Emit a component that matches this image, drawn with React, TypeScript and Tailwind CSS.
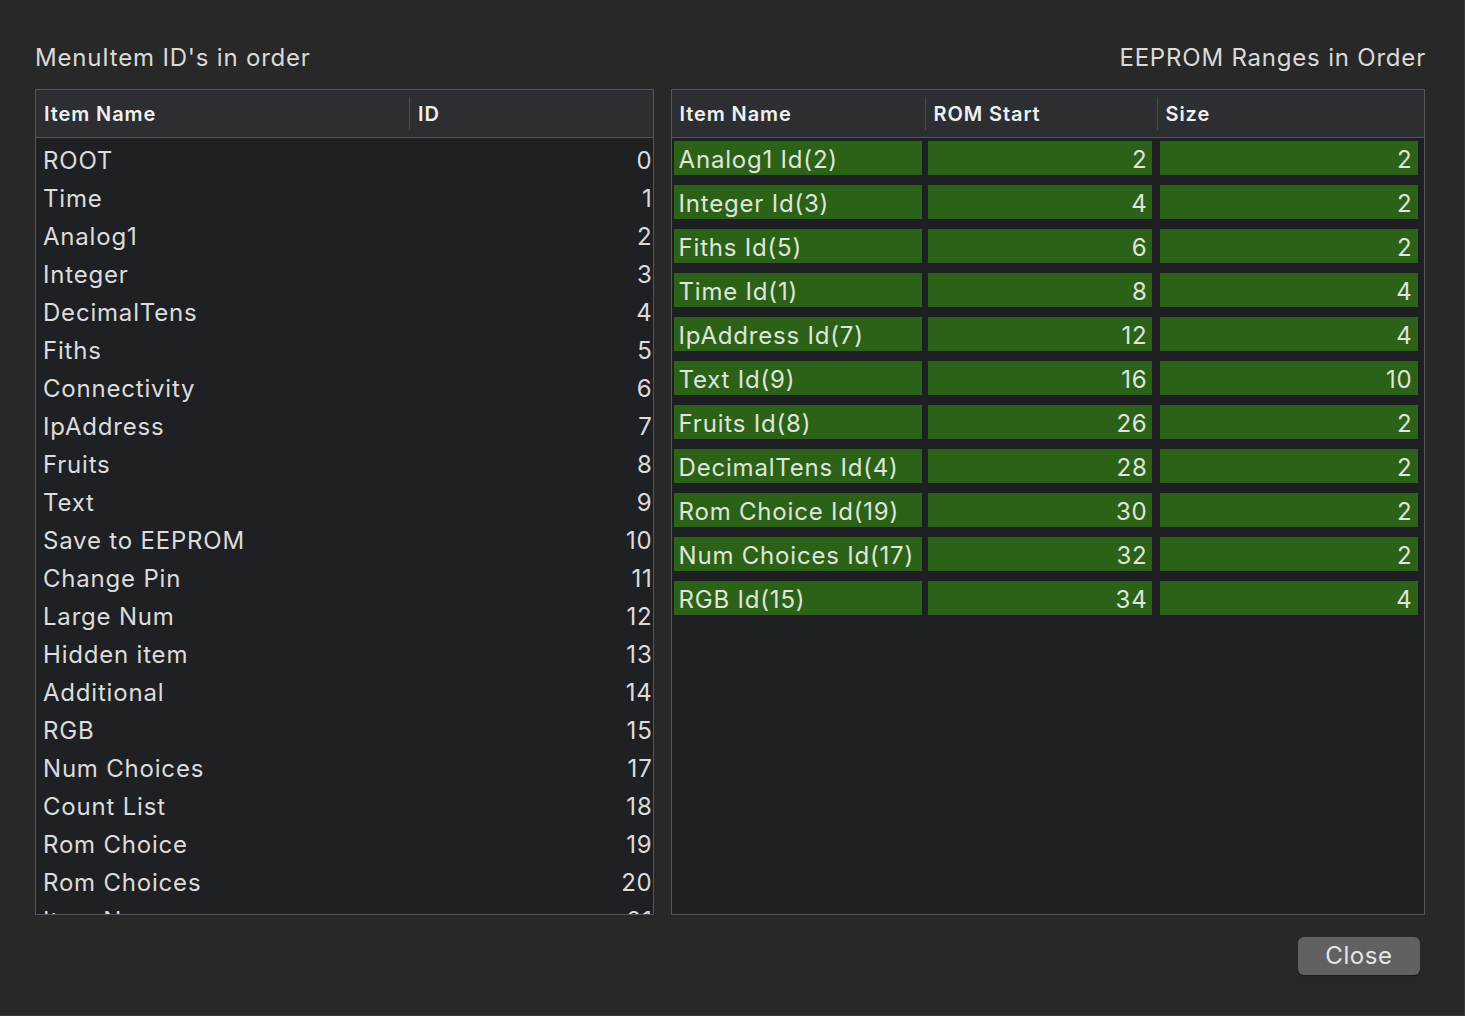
import React from 'react';

const menuItems: [string, number][] = [
  ['ROOT', 0],
  ['Time', 1],
  ['Analog1', 2],
  ['Integer', 3],
  ['DecimalTens', 4],
  ['Fiths', 5],
  ['Connectivity', 6],
  ['IpAddress', 7],
  ['Fruits', 8],
  ['Text', 9],
  ['Save to EEPROM', 10],
  ['Change Pin', 11],
  ['Large Num', 12],
  ['Hidden item', 13],
  ['Additional', 14],
  ['RGB', 15],
  ['Num Choices', 17],
  ['Count List', 18],
  ['Rom Choice', 19],
  ['Rom Choices', 20],
  ['Item Name', 21],
];

const romRanges: [string, number, number][] = [
  ['Analog1 Id(2)', 2, 2],
  ['Integer Id(3)', 4, 2],
  ['Fiths Id(5)', 6, 2],
  ['Time Id(1)', 8, 4],
  ['IpAddress Id(7)', 12, 4],
  ['Text Id(9)', 16, 10],
  ['Fruits Id(8)', 26, 2],
  ['DecimalTens Id(4)', 28, 2],
  ['Rom Choice Id(19)', 30, 2],
  ['Num Choices Id(17)', 32, 2],
  ['RGB Id(15)', 34, 4],
];

const HeaderDivider = () => <div className="w-px h-[33px] bg-[#4b4b4e]" />;

const MenuIdTable = () => (
  <div className="w-[619px] h-full border border-[#555557] bg-[#1f2023] flex flex-col overflow-hidden">
    {/* header */}
    <div className="h-[48px] shrink-0 bg-[#2d2e31] border-b border-[#555557] flex items-center text-[20px] font-semibold tracking-[0.9px] text-[#f0f0f0]">
      <div className="w-[373px] pl-[8px]">Item Name</div>
      <HeaderDivider />
      <div className="pl-[8px]">ID</div>
    </div>
    {/* rows */}
    <div className="pt-[4px] text-[24px] tracking-[0.8px] text-[#dcdcdc]">
      {menuItems.map(([name, id]) => (
        <div key={id} className="h-[38px] flex items-center justify-between pl-[7px]">
          <span>{name}</span>
          <span>{id}</span>
        </div>
      ))}
    </div>
  </div>
);

const RomTable = () => (
  <div className="w-[755px] h-full border border-[#555557] bg-[#1f2023] flex flex-col overflow-hidden">
    <div className="h-[48px] shrink-0 bg-[#2d2e31] border-b border-[#555557] flex items-center text-[20px] font-semibold tracking-[0.9px] text-[#f0f0f0]">
      <div className="w-[253px] pl-[8px]">Item Name</div>
      <HeaderDivider />
      <div className="w-[231px] pl-[8px]">ROM Start</div>
      <HeaderDivider />
      <div className="pl-[8px]">Size</div>
    </div>
    <div className="pt-[3px] pl-[2px] flex flex-col gap-[10px] text-[24px] tracking-[0.8px] text-[#dfe6db]">
      {romRanges.map(([name, start, size]) => (
        <div key={name} className="h-[34px] flex">
          <div className="w-[248px] bg-[#2c6118] pl-[5px] pt-[4px] flex items-center">{name}</div>
          <div className="w-[224px] ml-[6px] bg-[#2c6118] pr-[4px] pt-[4px] flex items-center justify-end">{start}</div>
          <div className="w-[258px] ml-[8px] bg-[#2c6118] pr-[5px] pt-[4px] flex items-center justify-end">{size}</div>
        </div>
      ))}
    </div>
  </div>
);

export default function App() {
  return (
    <div
      className="w-[1465px] h-[1016px] bg-[#282828] border-r border-b border-[#3a3a3a] flex flex-col pl-[35px] pr-[39px] pt-[43px]"
      style={{ fontFamily: 'Inter, "Noto Sans", sans-serif' }}
    >
      <div className="h-[46px] shrink-0 flex justify-between items-start text-[24px] leading-[30px] tracking-[0.8px] text-[#dadada]">
        <span>MenuItem ID's in order</span>
        <span className="-mr-[1px]">EEPROM Ranges in Order</span>
      </div>
      <div className="h-[826px] shrink-0 flex gap-[17px]">
        <MenuIdTable />
        <RomTable />
      </div>
      <div className="flex justify-end pt-[22px] pr-[5px]">
        <button className="w-[122px] h-[38px] rounded-[6px] bg-[#616161] text-[24px] tracking-[0.6px] text-[#e4e4e4] shadow-[0_1px_1px_rgba(0,0,0,0.4)]">
          Close
        </button>
      </div>
    </div>
  );
}
